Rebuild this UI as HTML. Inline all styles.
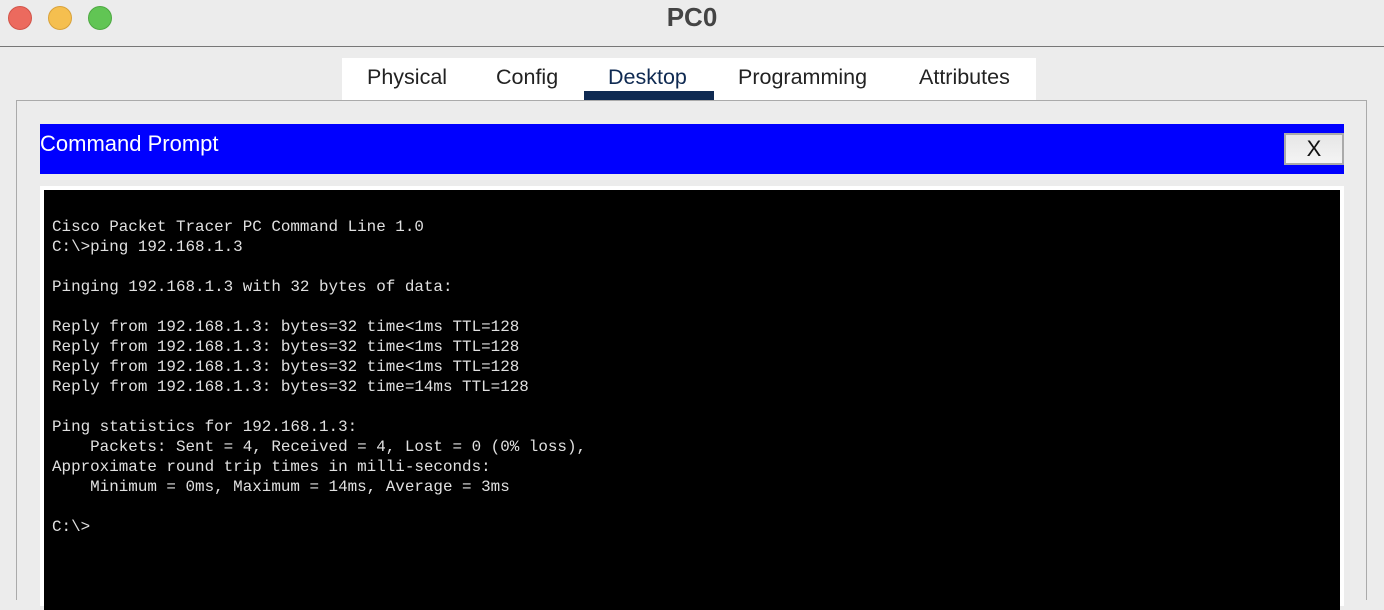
<!DOCTYPE html>
<html><head><style>
*{margin:0;padding:0;box-sizing:border-box}
body{width:1384px;height:590px;background:#ececec;position:relative;overflow:hidden;font-family:"Liberation Sans",sans-serif}
.dot{position:absolute;top:6px;width:24px;height:24px;border-radius:50%}
.title{position:absolute;top:2px;left:0;width:1384px;text-align:center;font-weight:bold;font-size:26px;color:#444}
.hl{position:absolute;top:46px;left:0;width:1384px;height:1px;background:#777}
.tabs{position:absolute;left:342px;top:58px;width:694px;height:42px;background:#fff}
.tab{position:absolute;top:7px;font-size:21.5px;color:#222}
.panel{position:absolute;left:16px;top:100px;width:1351px;height:500px;border:1px solid #aaa;border-bottom:none}
.blue{position:absolute;left:40px;top:124px;width:1304px;height:50px;background:#00f}
.blue span{position:absolute;left:0;top:7px;color:#fff;font-size:22px}
.x{position:absolute;left:1284px;top:133px;width:60px;height:32px;border:2px solid #aaa;background:linear-gradient(#e6e6e6,#f4f4f4);text-align:center;font-size:22px;line-height:28px;color:#111}
.term{position:absolute;left:40px;top:186px;width:1304px;height:420px;background:#fff;padding:4px}
.term pre{background:#000;width:1296px;height:420px;color:#e0e0e0;font-family:"Liberation Mono",monospace;font-size:15.9px;line-height:20px;padding:27px 0 0 8px}
</style></head><body>
<div class="dot" style="left:8px;background:#ec6a5e;border:1px solid #d25449"></div>
<div class="dot" style="left:48px;background:#f5bf4f;border:1px solid #d9a23a"></div>
<div class="dot" style="left:88px;background:#61c554;border:1px solid #4ea942"></div>
<div class="title">PC0</div>
<div class="hl"></div>
<div class="panel"></div>
<div class="tabs">
<span class="tab" style="left:25px">Physical</span>
<span class="tab" style="left:154px">Config</span>
<span class="tab" style="left:266px;color:#0f2a52">Desktop</span>
<div style="position:absolute;left:242px;top:33px;width:130px;height:9px;background:#0f2a52"></div>
<span class="tab" style="left:396px">Programming</span>
<span class="tab" style="left:577px">Attributes</span>
</div>
<div class="blue"><span>Command Prompt</span></div>
<div class="x">X</div>
<div class="term"><pre>
Cisco Packet Tracer PC Command Line 1.0
C:\&gt;ping 192.168.1.3

Pinging 192.168.1.3 with 32 bytes of data:

Reply from 192.168.1.3: bytes=32 time&lt;1ms TTL=128
Reply from 192.168.1.3: bytes=32 time&lt;1ms TTL=128
Reply from 192.168.1.3: bytes=32 time&lt;1ms TTL=128
Reply from 192.168.1.3: bytes=32 time=14ms TTL=128

Ping statistics for 192.168.1.3:
    Packets: Sent = 4, Received = 4, Lost = 0 (0% loss),
Approximate round trip times in milli-seconds:
    Minimum = 0ms, Maximum = 14ms, Average = 3ms

C:\&gt;</pre></div>
</body></html>
